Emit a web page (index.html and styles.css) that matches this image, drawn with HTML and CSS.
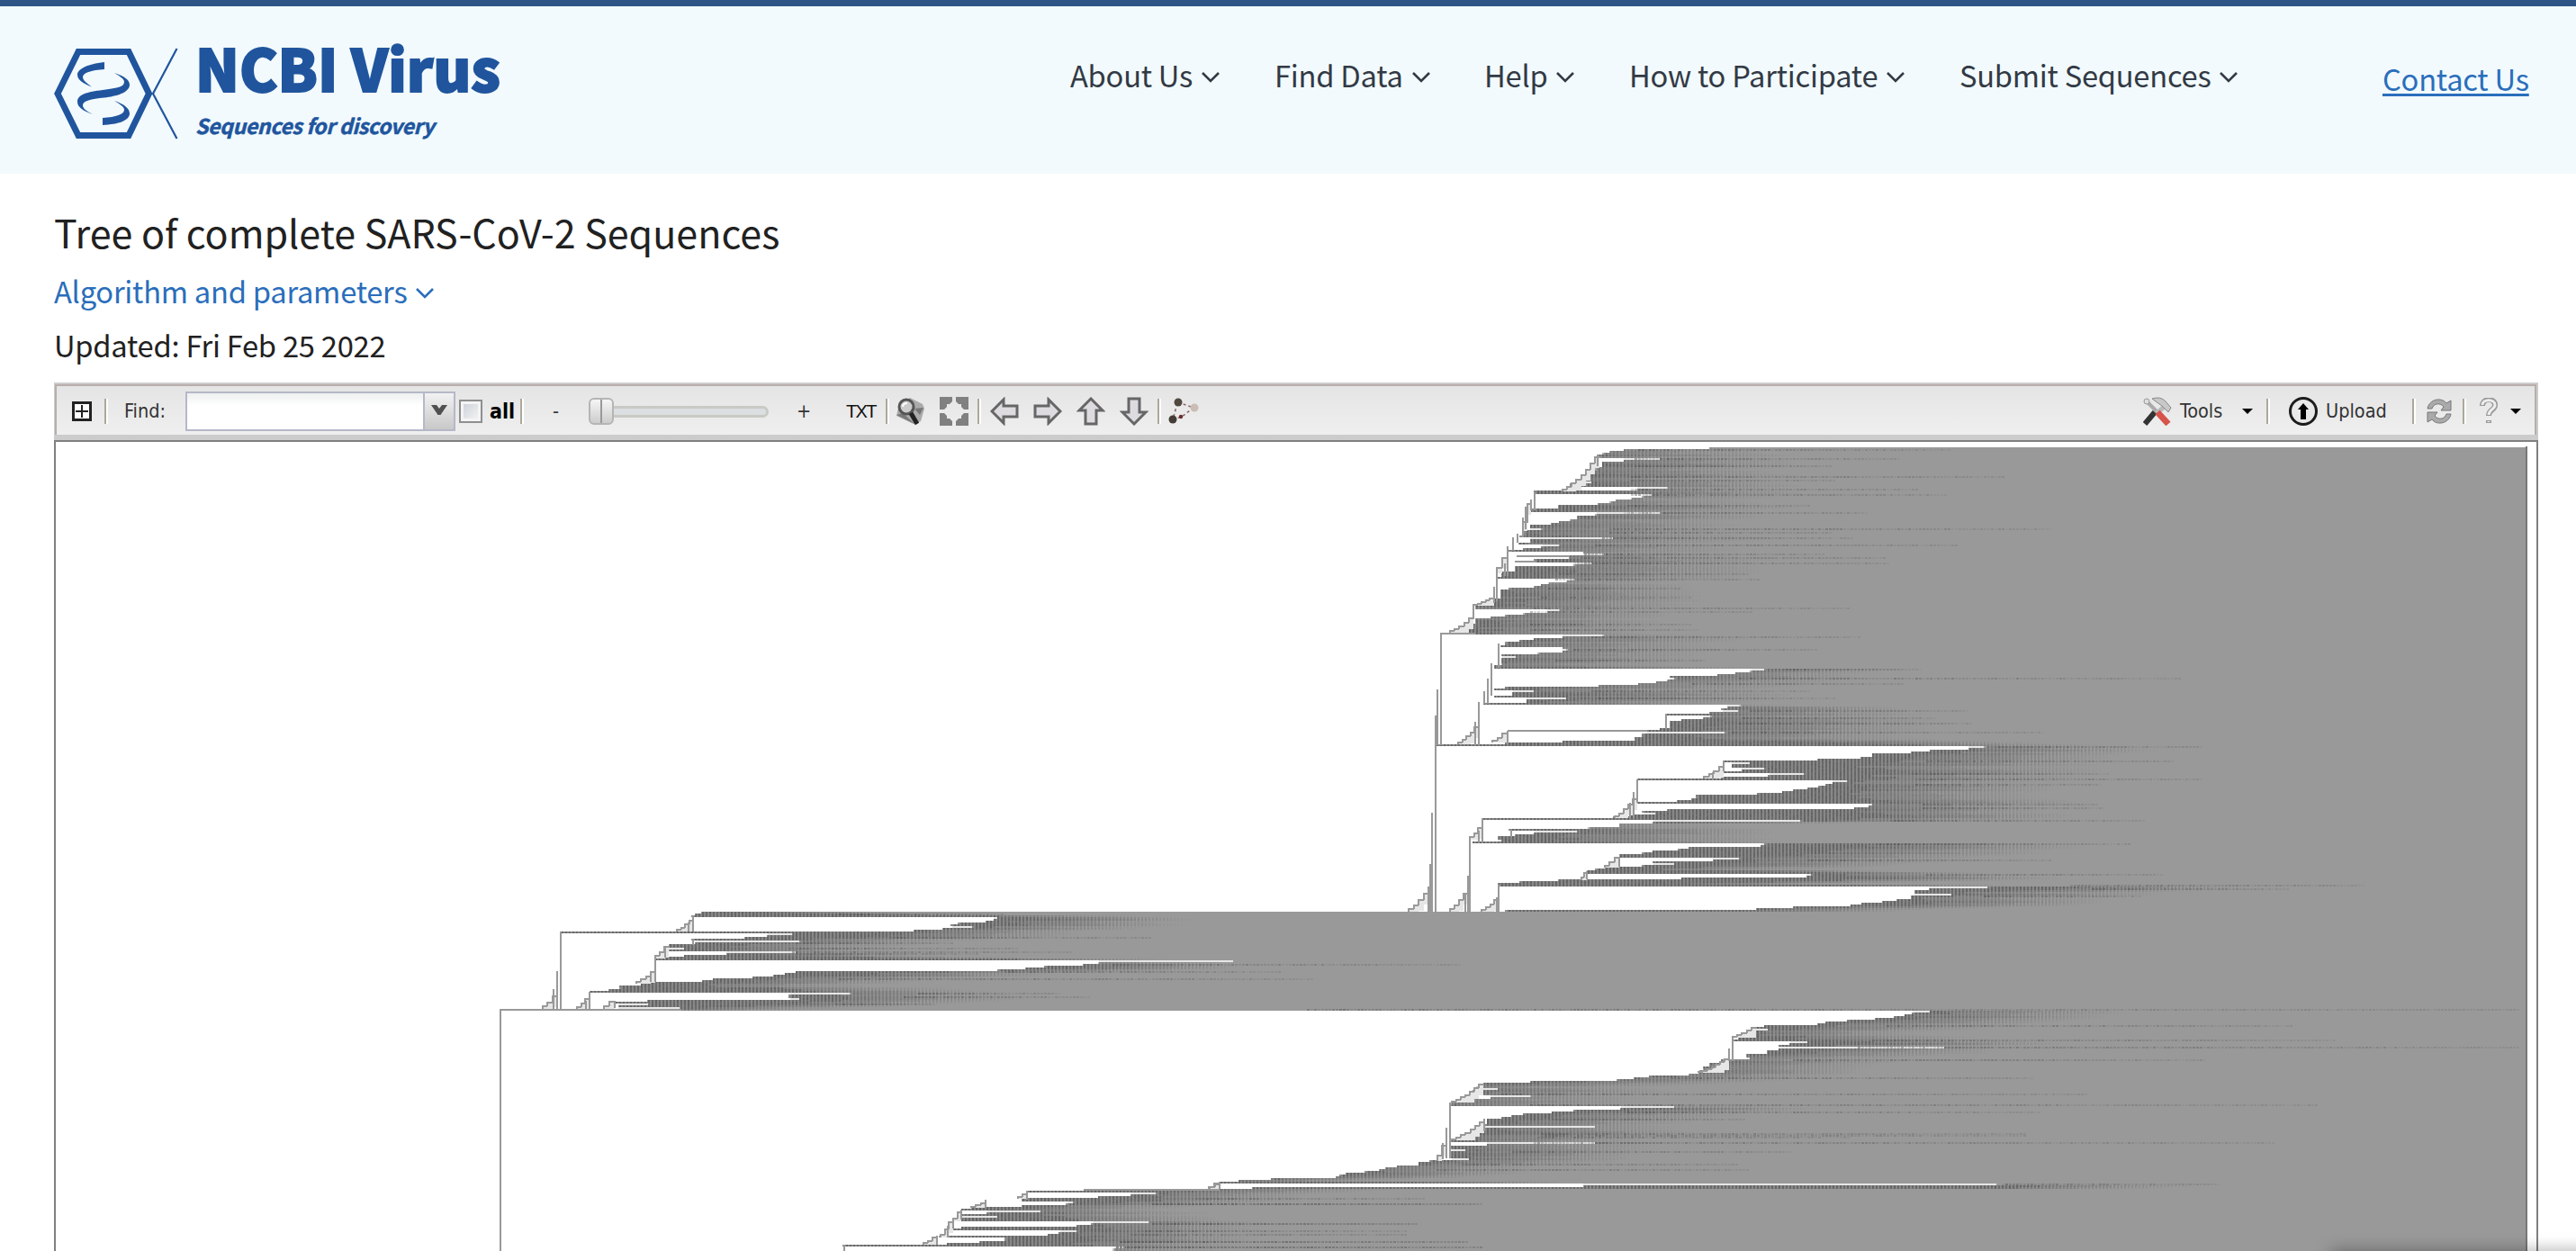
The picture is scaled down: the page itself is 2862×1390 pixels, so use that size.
FILE: index.html
```html
<!DOCTYPE html>
<html lang="en">
<head>
<meta charset="utf-8">
<title>NCBI Virus</title>
<link rel="stylesheet" href="styles.css">
</head>
<body>
<header class="header">
  <a class="logo">
    <svg class="logo-mark" viewBox="0 0 140 104" width="140" height="104" fill="none" stroke="#20559e">
      <path d="M28 5.500H84L106.500 52L84 98.500H28L5 52Z" stroke-width="7"/>
      <path d="M137.500 2L111 52L137.500 102" stroke-width="2.200"/>
      <path d="M57 17C38 19 27 25 27 31C27 37 34 41 43 44.500C35 39 33 36 33 33.500C33 29 42 26 57 25ZM68 29C80 33 85 37 85 42C85 51 70 55 57 56.500C42 58 33 60 33 65C33 68 36 71 44 75C33 71 27 67 27 61C27 53 38 50 55 48C70 46 79 45 79 39C79 36 75 33 68 29ZM68 60C80 64 85 69 85 74C85 82 73 86 55 87V79C70 78 79 75 79 70C79 67 75 64 68 60Z" fill="#20559e" stroke="none"/>
    </svg>
    <span class="logo-text"><span class="logo-name">NCBI Virus</span><span class="logo-tag">Sequences for discovery</span></span>
  </a>
  <nav class="nav">
    <a class="n1">About Us<svg class="chev" viewBox="0 0 22 14"><path d="M2 2L11 11L20 2"/></svg></a>
    <a class="n2">Find Data<svg class="chev" viewBox="0 0 22 14"><path d="M2 2L11 11L20 2"/></svg></a>
    <a class="n3">Help<svg class="chev" viewBox="0 0 22 14"><path d="M2 2L11 11L20 2"/></svg></a>
    <a class="n4">How to Participate<svg class="chev" viewBox="0 0 22 14"><path d="M2 2L11 11L20 2"/></svg></a>
    <a class="n5">Submit Sequences<svg class="chev" viewBox="0 0 22 14"><path d="M2 2L11 11L20 2"/></svg></a>
  </nav>
  <a class="contact">Contact Us</a>
</header>
<main class="main">
  <h1 class="title">Tree of complete SARS-CoV-2 Sequences</h1>
  <a class="algo">Algorithm and parameters<svg class="chev" viewBox="0 0 22 14"><path d="M2 2L11 11L20 2"/></svg></a>
  <p class="updated">Updated: Fri Feb 25 2022</p>
  <div class="toolbar">
    <svg class="expand-box" viewBox="0 0 22 22" width="22" height="22"><rect x="1.500" y="1.500" width="19" height="19" fill="#fff" stroke="#222" stroke-width="3"/><path d="M4 11H18M11 4V18" stroke="#222" stroke-width="2"/></svg>
    <i class="sep"></i>
    <span class="find">Find:</span>
    <span class="combo"><span class="field"></span><span class="trigger"><svg viewBox="0 0 18 12" width="18" height="12"><path d="M0 0H6L9 4L12 0H18L10.500 11H7.500Z" fill="#505050"/></svg></span></span>
    <i class="check"></i>
    <b class="all">all</b>
    <i class="sep s-all"></i>
    <span class="minus">-</span>
    <span class="slider"><i class="thumb"></i><i class="track"></i></span>
    <span class="plus">+</span>
    <span class="txt">TXT</span>
    <i class="sep s-txt"></i>
    <svg class="mag" viewBox="0 0 32 32" width="32" height="32"><path d="M3 8L15 1L29 8L31 13L27 27L19 30L0 21Z" fill="#aaa"/><path d="M0 20L7 18L20 30Z M20 13L30 12L26 20Z" fill="#777"/><circle cx="11" cy="11" r="8" fill="#ccc" stroke="#555" stroke-width="3"/><path d="M16 18L23 30" stroke="#222" stroke-width="5"/><path d="M7 11Q7 7 12 7" stroke="#fff" stroke-width="2" fill="none"/></svg>
    <svg class="fit" viewBox="0 0 32 32" width="32" height="32" fill="#808080"><path d="M0 0H14V5L11 8H8V11L5 14H0ZM18 0H32V14H27L24 11V8H21L18 5ZM0 18H5L8 21V24H11L14 27V32H0ZM27 18H32V32H18V27L21 24H24V21Z"/></svg>
    <i class="sep s-fit"></i>
    <svg class="arr" viewBox="0 0 32 32"><path d="M2 16L15 3V10H30V22H15V29Z"/></svg>
    <svg class="arr" viewBox="0 0 32 32"><path d="M30 16L17 3V10H2V22H17V29Z"/></svg>
    <svg class="arr" viewBox="0 0 32 32"><path d="M16 2L3 15H10V30H22V15H29Z"/></svg>
    <svg class="arr" viewBox="0 0 32 32"><path d="M16 30L3 17H10V2H22V17H29Z"/></svg>
    <i class="sep s-arr"></i>
    <svg class="nodes" viewBox="0 0 34 30" width="34" height="30"><path d="M11 5L28 11L15 21L5 24L9 10" fill="none" stroke="#8b6b68" stroke-width="1.600" stroke-dasharray="3 3"/><circle cx="11" cy="5" r="4.500" fill="#50473f"/><circle cx="5" cy="24" r="4.500" fill="#443c36"/><circle cx="29" cy="11" r="4.500" fill="#cbbdb5"/><circle cx="14" cy="21" r="2.200" fill="#6a2d2d"/></svg>
    <span class="right">
      <svg class="tools-ic" viewBox="0 0 32 32" width="32" height="32"><path d="M3 4L16 17" stroke="#aaa" stroke-width="4"/><circle cx="4" cy="5" r="3" fill="#ddd" stroke="#999"/><path d="M27 8L14 19" stroke="#bbb" stroke-width="5"/><path d="M10 2Q20-1 25 5L31 12L28 17L21 10Z" fill="#c8c8c8" stroke="#888"/><path d="M13 17L2 30" stroke="#333" stroke-width="6"/><path d="M16 17L28 30" stroke="#d6544b" stroke-width="7"/></svg>
      <span class="tools">Tools</span><i class="caret"></i><i class="sep s-tools"></i>
      <svg class="up-ic" viewBox="0 0 32 32" width="32" height="32"><circle cx="16" cy="16" r="14.500" fill="#e8e8e8" stroke="#1c1c1c" stroke-width="3"/><path d="M16 7L22 14H19V25H13V14H10Z"/></svg>
      <span class="upload">Upload</span><i class="sep s-up"></i>
      <svg class="ref" viewBox="0 0 28 28" width="28" height="28"><path d="M1 11C3 0 17-2 22 5L27 2V13H16L19 9C15 4 8 5 6 11ZM27 17C25 28 11 30 6 23L1 26V15H12L9 19C13 24 20 23 22 17Z" fill="#aaa" stroke="#777"/></svg>
      <i class="sep s-ref"></i>
      <svg class="help" viewBox="0 0 20 30" width="20" height="30" fill="none"><path d="M3 9C3 0 17 0 17 8C17 14 10 13 10 20M10 25V28" stroke="#999" stroke-width="6"/><path d="M3 8C3 1 17 1 17 8C17 13 10 13 10 19M10 26V27" stroke="#eee" stroke-width="3"/></svg>
      <i class="caret c-last"></i>
    </span>
  </div>
  <div class="tree"><canvas id="tree" width="2756" height="899"></canvas></div>
</main>
<script src="tree.js"></script>
</body>
</html>
```
FILE: styles.css
```css
* { box-sizing: border-box; }
html, body { margin: 0; height: 1390px; overflow: hidden; }
body { background: #fff; color: #212121; font: 32.7px/50px "Noto Sans CJK SC", sans-serif; letter-spacing: -0.25px; }
body::after { content: ""; position: fixed; left: 2590px; right: -20px; bottom: -12px; height: 12px; box-shadow: 0 0 18px rgba(0,0,0,.4); }
.header { height: 193px; border-top: 7px solid #2f5587; background: #f2fafd; display: flex; align-items: flex-start; padding-left: 60px; }
.logo { display: flex; width: 1129px; padding-top: 31px; color: #20559e; }
.logo-mark { margin-top: 14px; flex: none; width: 140px; margin-left: -1px; }
.logo-text { display: flex; flex-direction: column; margin-left: 18px; white-space: nowrap; }
.logo-name { font-size: 64px; line-height: 72px; font-weight: 900; letter-spacing: 0; -webkit-text-stroke: 2px #20559e; }
.logo-tag { font-size: 23px; line-height: 30px; font-weight: 700; font-style: italic; margin-top: 14px; letter-spacing: -0.35px; -webkit-text-stroke: 0.5px #20559e; }
.nav { display: flex; color: #323a45; line-height: 40px; padding-top: 56px; white-space: nowrap; }
.n1 { width: 227px; } .n2 { width: 233px; } .n3 { width: 161px; } .n4 { width: 367px; } .n5 { width: 470px; }
.chev { width: 22px; height: 14px; margin-left: 9px; vertical-align: 4px; fill: none; stroke: currentColor; stroke-width: 2.6; }
.contact { margin-top: 60px; color: #2a6ebb; line-height: 40px; white-space: nowrap; text-decoration: underline; text-decoration-thickness: 3px; text-underline-offset: 3px; text-decoration-skip-ink: none; }
.main { padding: 34px 42px 0 60px; display: flex; flex-direction: column; }
.title { margin: 0; font-size: 43px; line-height: 60px; font-weight: 400; letter-spacing: 0; }
.algo { margin-top: 11px; color: #2a6ebb; }
.updated { margin: 10px 0 17px; }
.toolbar { height: 64px; border: solid #ccc; border-width: 2px 2px 6px 1px; box-shadow: inset 2px 2px #b9aeac, inset -2px 0 #b9aeac; background: linear-gradient(#e4e4e4, #efefef); display: flex; align-items: center; padding: 4px 0 0 19px; font: 21.5px/30px "DejaVu Sans Condensed", "DejaVu Sans", sans-serif; font-stretch: condensed; letter-spacing: 0; color: #333; }
.toolbar > *, .right > * { flex: none; }
.sep { width: 4px; height: 28px; border-left: 2px solid #aca899; border-right: 2px solid #fff; margin-left: 14px; }
.find { width: 50px; margin-left: 18px; }
.combo { display: flex; width: 300px; height: 44px; margin-left: 18px; border: 2px solid #b5b8c8; }
.field { flex: 1; background: linear-gradient(#eef0f0, #fff 14px); }
.trigger { width: 34px; border-left: 2px solid #b5b8c8; background: linear-gradient(#f2f2f2, #c8c8c8); display: flex; justify-content: center; padding-top: 13px; }
.check { width: 26px; height: 26px; margin-left: 4px; border: 2px solid #8e8f8f; background: linear-gradient(135deg, #c9ced6, #f7f7f7); box-shadow: inset 0 0 0 3px #f4f4f4; }
.all { color: #000; font-size: 23px; margin-left: 8px; width: 28px; }
.s-all { margin-left: 6px; }
.minus { margin-left: 32px; width: 9px; }
.slider { margin-left: 31px; width: 200px; display: flex; align-items: center; }
.thumb { width: 28px; height: 30px; border: 2px solid #b5b5b5; border-radius: 6px; background: linear-gradient(90deg, transparent 11px, #999 11px 13px, transparent 13px), linear-gradient(#f6f6f6, #ccc); }
.track { width: 172px; height: 13px; border: 3px solid #c9c9c5; border-left: 0; border-radius: 0 7px 7px 0; background: #dcdfe1; }
.plus { margin-left: 31px; width: 18px; }
.txt { margin-left: 37px; width: 34px; color: #111; font: 20px/30px "Liberation Sans", sans-serif; letter-spacing: -1.6px; }
.s-txt { margin-left: 10px; }
.mag { margin-left: 8px; } .fit { margin-left: 16px; } .s-fit { margin-left: 10px; }
.arr { width: 32px; height: 32px; margin-left: 16px; fill: #dddbe0; stroke: #666; stroke-width: 3; }
.s-fit + .arr { margin-left: 10px; }
.s-arr { margin-left: 10px; } .nodes { margin-left: 8px; }
.right { display: flex; align-items: center; margin-left: auto; width: 437px; }
.tools { margin-left: 9px; width: 60px; }
.caret { margin-left: 9px; border: 6px solid transparent; border-top-color: #000; border-bottom: 0; }
.s-tools { margin-left: 15px; } .up-ic { margin-left: 21px; } .upload { margin-left: 9px; width: 78px; }
.s-up { margin-left: 18px; } .ref { margin-left: 12px; } .s-ref { margin-left: 12px; } .help { margin-left: 15px; } .c-last { margin-left: 14px; }
.tree { height: 901px; border: 2px solid #808080; border-bottom: 0; overflow: hidden; }
.tree canvas { display: block; }
```
FILE: tree.js
```js
const ctx = document.getElementById('tree').getContext('2d');
ctx.translate(-62, -491);

// Each section has its own origin and scale. "edge" lists pairs: row, first x that holds a leaf.
// "lines" are branches (x0,y0,x1,y1), "ladders" are stepped backbones, "streaks" are row, last x.
const A = {
  o: [1540, 480, 2.24, 3], end: 1047,
  edge: [50,805,56,592,62,558,68,543,74,530,80,527,87,682,93,592,99,537,115,525,130,505,150,490,165,512,171,462,183,700,190,625,196,372,205,660,212,640,218,612,226,572,232,560,238,527,244,427,256,355,267,686,273,525,279,478,291,460,297,430,303,410,309,358,321,390,327,345,345,335,351,565,357,360,367,330,375,432,381,390,387,345,393,310,399,490,405,543,411,455,423,372,429,320,434,512,441,470,447,320,465,290,486,280,488,471,495,450,501,405,507,385,513,370,522,310,528,285,555,270,570,240,575,222,591,432,597,400,603,345,609,300,615,262,621,222,640,205,660,180,669,150,675,543,682,440,688,368,695,335,702,300,709,285,715,440,722,453,728,440,733,380,739,290,745,323,753,290,775,270,789,945,795,910,801,870,807,825,813,705,817,722,825,700,832,672,838,628,844,533,850,300,856,270,860,367,867,315,878,270,884,448,891,350,903,245,908,882,915,850,921,838,926,875,933,805,939,697,944,810,950,790,956,735,963,705,988,680,993,650,998,846,1005,640,1017,620,1028,440,1034,300,1039,230,1042,125],
  lines: [136,670,136,1045,127,857,127,1045,123,945,123,1090,230,900,230,1045,222,965,222,1045,263,770,263,880,254,822,254,907,245,865,245,907,280,705,280,785,276,465,276,565,268,515,268,570,303,380,303,480,296,438,296,480,370,200,370,262,361,225,361,262,347,250,347,325,340,285,340,350,316,352,316,395,326,340,326,370,218,575,218,620,303,995,303,1040,697,940,697,990,136,672,222,672,303,996,650,996,325,413,455,413,320,432,372,432,526,75,526,115],
  ladders: [160,670,218,620,218,580,268,555,275,470,303,420,340,330,361,240,440,198,530,85,180,1042,230,985,265,1035,303,1005],
  streaks: [55,1400,84,1275,108,1110,143,1540,160,1120,186,1320,204,1390,240,1050,264,1200,318,1650,330,1110,352,1160,372,1420,402,1090,415,1240,433,1250,470,905,490,930,517,730,547,755,582,1150,598,910,635,760,654,775,678,1180,721,1075,756,790,789,1330,815,1980,836,1290,857,1050,881,1120,923,1445,950,1365,968,1460,1000,1640]
};
const B = {
  o: [1540, 810, 2.24, 3], end: 609,
  edge: [57,1492,63,1450,70,1355,76,1305,82,1210,94,1180,100,1073,106,840,110,905,117,860,128,945,135,885,143,820,147,1043,153,955,159,838,166,625,170,1150,177,1110,184,1095,190,1080,197,1050,203,1015,209,985,215,928,221,775,233,760,238,723,244,625,249,1210,255,1200,261,1165,267,700,273,640,278,670,284,610,294,570,298,240,302,1034,309,665,315,580,327,507,333,310,339,477,345,370,351,320,358,280,367,288,375,215,380,945,387,933,393,755,399,730,408,662,414,640,420,580,429,882,435,812,441,665,446,717,453,640,459,545,465,525,473,500,482,1062,489,1045,495,735,501,428,509,337,515,280,524,1500,531,1350,538,1315,547,1407,555,1305,565,1270,571,1235,579,1185,586,1155,592,1015,598,920,603,300],
  lines: [123,0,123,610,114,280,114,610,105,525,105,610,110,450,110,610,625,168,625,245,617,210,617,297,607,245,607,297,240,298,240,378,231,340,231,378,208,370,208,610,204,490,204,610,196,550,196,610,280,520,280,610,276,560,276,610,840,106,840,140,813,145,813,167,580,425,580,460,500,473,500,500,311,335,311,360],
  ladders: [55,609,105,550,158,609,204,550,570,297,625,235,208,370,240,330,790,166,840,125,238,609,280,570,545,463,580,430,485,505,500,480],
  streaks: []
};
const C = {
  o: [540, 990, 1.568, 3], end: 399,
  edge: [68,375,74,365,82,360,86,890,93,885,98,870,104,825,110,812,116,850,123,795,129,745,136,130,140,534,147,490,153,450,159,360,164,549,171,365,180,318,188,345,195,318,201,540,208,418,214,345,220,312,226,294,231,1302,237,1068,243,1040,249,975,256,940,262,893,267,540,273,520,279,500,286,465,292,395,298,378,303,270,316,235,328,215,334,180,339,637,345,530,355,546,363,280,369,225,375,285,381,230,387,337,392,25],
  lines: [25,394,25,1200,25,395,340,395,130,136,130,394,124,268,124,394,118,328,118,394,360,80,360,136,353,105,353,136,294,226,294,303,287,268,287,303,181,335,181,394,174,365,174,394,225,370,225,390,360,160,360,180,312,190,312,222],
  ladders: [98,394,124,350,333,136,360,100,158,394,181,360,205,392,225,370,262,310,294,270,294,226,318,185],
  streaks: [73,900,150,1160,168,810,187,925,198,1020,204,860,240,1700,265,1385,288,1440,335,1000,348,1050,372,780]
};
const D = {
  o: [1300, 1100, 1.568, 3], end: 662,
  edge: [69,1323,75,1295,81,1280,88,1262,94,1228,100,1183,106,1143,112,1128,118,1035,124,1020,128,1043,135,1015,145,1000,155,990,163,980,170,1110,177,1080,183,1062,188,1348,195,1060,204,1040,212,1005,224,1010,231,960,241,940,253,930,265,925,275,920,280,905,285,838,291,808,297,780,303,628,309,547,320,537,326,571,333,530,350,628,357,558,363,500,375,490,386,878,393,785,399,705,405,665,411,618,417,595,423,578,430,552,445,545,452,740,460,540,480,525,495,490,506,740,513,552,519,490,531,516,538,490,560,520,568,455,576,432,584,395,590,375,597,365,603,342,609,305,615,298,621,290,627,178,633,120,639,87,644,1440,651,719,657,142],
  lines: [980,160,980,237,973,195,973,237,488,375,488,560,481,460,481,562,475,510,475,565,87,640,87,662,547,430,547,470],
  ladders: [920,275,973,230,980,160,1020,125,490,375,545,315,490,500,547,440,465,570,481,520,68,662,87,645],
  streaks: [707,540,773,430,834,520,852,545,800,410,430,1000,480,1490,490,1180,538,1080,575,990,595,1010]
};
const E = {
  o: [900, 1240, 1.96, 3], end: 450,
  edge: [242,597,249,472,255,757,261,700,267,627,274,460,283,577,291,560,297,460,303,350,309,330,315,502,321,388,328,330,333,408,339,320,350,738,357,615,363,585,369,330,376,310,381,584,387,545,396,520,400,280,408,428,416,370,423,298,429,75,434,686,441,662,447,635],
  lines: [75,430,75,450,892,222,892,243,597,245,892,245,472,250,472,278,382,280,382,305,276,400,276,430,300,365,300,405,311,345,311,375,330,312,330,345],
  ladders: [247,430,276,405,285,405,311,355,311,350,330,320,350,305,382,290,452,277,472,260,870,243,892,228],
  streaks: [270,1340,288,1460,354,1320,390,1300,414,1430,432,1460]
};
const sections = [A, B, C, D, E];

// Page rows where the dense texture ends and where it has faded away.
const density = [
  [496,1880,1990],[560,1870,1970],[600,1840,1950],[640,1790,1900],[680,1760,1850],[703,1760,1830],
  [705,1830,1930],[740,1780,1880],[743,2040,2110],[758,1960,2060],[765,1830,1980],[782,1840,1960],
  [784,2010,2130],[820,1980,2130],[829,2280,2360],[850,2180,2320],[870,2190,2290],[900,2200,2300],
  [911,2160,2260],[915,1850,1960],[935,1830,1960],[937,2150,2280],[952,2100,2240],[965,2000,2070],
  [970,2200,2280],[976,2220,2320],[982,1900,1940],[984,2420,2500],[992,2290,2400],[1005,2190,2270],
  [1011,2020,2100],[1013,930,980],[1018,1250,1310],[1030,1200,1270],[1040,1050,1150],[1047,930,1030],
  [1062,950,1020],[1066,1340,1400],[1076,1230,1310],[1085,1000,1100],[1094,930,1000],[1102,1080,1180],
  [1110,1050,1140],[1121,880,930],[1123,2280,2380],[1138,2160,2260],[1146,2020,2100],[1158,2170,2260],
  [1170,2080,2170],[1195,1990,2060],[1205,1740,1860],[1227,1720,1830],[1230,1960,2040],[1240,1790,1880],
  [1275,1760,1850],[1302,1640,1700],[1312,1480,1530],[1316,2340,2420],[1319,2340,2400],[1321,1470,1560],
  [1330,1390,1440],[1345,1270,1330],[1354,1280,1340],[1358,1340,1410],[1380,1300,1370],[1390,1300,1370]
];
const far = [602,715,630,650,652,495,664,715,675,480,710,475,720,487,741,580,789,545,820,370,845,620,868,1080,872,910,888,575,1106,1440,1134,915,1164,1020,1178,1445,1202,720,1237,325,1268,450,1288,975,1302,340,1343,310,1361,880,1440,755];

const right = 2806;
let seed = 7;
const rnd = () => (seed = (seed * 16807) % 2147483647) / 2147483647;
const rows = [];
for (const s of sections) {
  const [ox, oy, sx, sy] = s.o;
  s.X = u => Math.round(ox + u / sx);
  s.Y = v => Math.round(oy + v / sy);
}
function edgeAt(y) {
  let x = null;
  for (const s of sections) {
    const [ox, oy, sx, sy] = s.o, v = (y - oy) * sy;
    if (v < s.edge[0] || v >= s.end) continue;
    for (let i = 0; i < s.edge.length && s.edge[i] <= v; i += 2) x = ox + s.edge[i + 1] / sx;
  }
  return x;
}
for (let y = 497, last = 1900; y < 1390; y += 2) {
  const e = edgeAt(y + 1);
  last = e === null ? last : e;
  rows.push([y, Math.round(last)]);
}
ctx.fillStyle = '#999';
for (const [y, x] of rows) ctx.fillRect(x, y, right - x, 2);
rows.forEach(([y, x], i) => {
  const near = Math.max(i ? rows[i - 1][1] : x, i < rows.length - 1 ? rows[i + 1][1] : x);
  if (near < x) { ctx.fillStyle = '#e6e6e6'; ctx.fillRect(near, y, x - near, 2); }
});

function extent(y) {
  let k = 0;
  while (k < density.length - 2 && density[k + 1][0] <= y) k++;
  const a = density[k], b = density[k + 1], t = (y - a[0]) / (b[0] - a[0]);
  return [a[1] + (b[1] - a[1]) * t, a[2] + (b[2] - a[2]) * t];
}
let drift = 0;
for (const [y, left] of rows) {
  const [f, g] = extent(y), span = g - f;
  drift = drift * .75 + (rnd() - .5) * 60;
  const solid = f - 110 + drift, thin = .6 + rnd() * .4;
  for (let x = left + 1; x < g + 50 && x < right; x += 4) {
    const fade = x < solid ? 1 : Math.max(0, 1 - (x - solid) / (span + 110));
    const a = fade === 1 ? 1 : fade * thin;
    if (a <= 0.02) continue;
    const cx = x - x % 4;
    ctx.fillStyle = `rgba(80,80,80,${(a * (.6 + rnd() * .15)).toFixed(2)})`;
    ctx.fillRect(cx, y, 2, 2);
    if (a > .4) { ctx.fillStyle = `rgba(110,110,110,${(a * .4).toFixed(2)})`; ctx.fillRect(cx + 2, y, 2, 2); }
  }
}
function streak(y, x1, x0) {
  y = 497 + 2 * Math.floor((y - 496) / 2);
  for (let x = x0 - x0 % 4; x < x1 && x < right - 6; x += 4) {
    const a = (.12 + rnd() * .35) * (1 - .6 * (x - x0) / (x1 - x0 + 1));
    ctx.fillStyle = `rgba(70,70,70,${a.toFixed(2)})`;
    ctx.fillRect(x, y, 3, 2);
  }
}
for (const s of sections) for (let i = 0; i < s.streaks.length; i += 2) {
  const y = s.Y(s.streaks[i]);
  streak(y, s.X(s.streaks[i + 1]), Math.round(extent(y)[0] - 60));
}
for (let i = 0; i < far.length; i += 2) {
  const y = 480 + far[i] / 1.723;
  streak(y, 2100 + far[i + 1] / 2.058, Math.round(extent(y)[0] - 60));
}

ctx.strokeStyle = '#999';
ctx.lineWidth = 2;
const seg = (x0, y0, x1, y1) => { ctx.beginPath(); ctx.moveTo(x0, y0); ctx.lineTo(x1, y1); ctx.stroke(); };
for (const s of sections) {
  for (let i = 0; i < s.ladders.length; i += 4) {
    const [u0, v0, u1, v1] = s.ladders.slice(i, i + 4);
    const x0 = s.X(u0), y0 = s.Y(v0), x1 = s.X(u1), y1 = s.Y(v1), n = Math.max(2, Math.round((x1 - x0) / 5));
    for (let k = 0; k < n; k++) {
      const t = k / n, bend = v => v * v * .6 + v * .4;
      const xa = Math.round(x0 + (x1 - x0) * t), xb = Math.round(x0 + (x1 - x0) * (k + 1) / n);
      const ya = Math.round(y0 + (y1 - y0) * bend(t)), yb = Math.round(y0 + (y1 - y0) * bend((k + 1) / n));
      ctx.fillStyle = '#e6e6e6';
      ctx.fillRect(xa, yb, xb - xa, Math.min(y0 - yb, 12));
      seg(xa, ya, xa, yb); seg(xa - 1, yb, xb + 1, yb);
    }
  }
  for (let i = 0; i < s.lines.length; i += 4) {
    const [u0, v0, u1, v1] = s.lines.slice(i, i + 4);
    seg(s.X(u0), s.Y(v0), s.X(u1), Math.min(s.Y(v1), 1392));
  }
}
ctx.fillStyle = '#777';
ctx.fillRect(right, 496, 2, 900);
```
